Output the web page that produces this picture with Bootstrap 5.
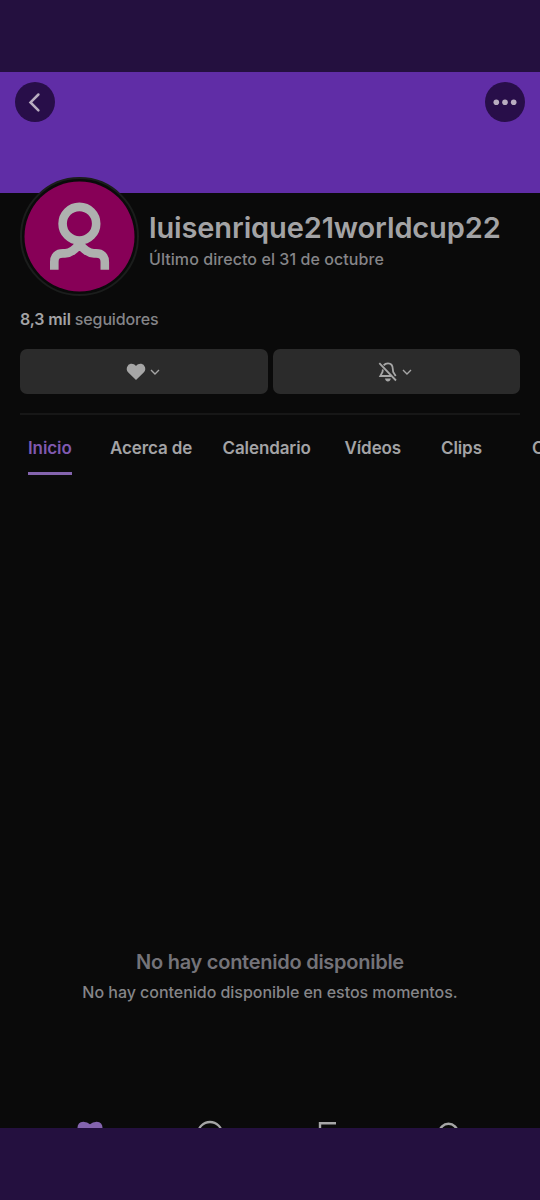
<!DOCTYPE html>
<html lang="es">
<head>
<meta charset="utf-8">
<meta name="viewport" content="width=device-width, initial-scale=1">
<title>luisenrique21worldcup22</title>
<link href="https://cdn.jsdelivr.net/npm/bootstrap@5.3.0/dist/css/bootstrap.min.css" rel="stylesheet">
<style>
body{background:#0a0a0a;color:#a3a3a5;font-family:Inter,"Liberation Sans",sans-serif;width:540px;height:1200px;overflow:hidden}
svg{display:block}
.system-bar{height:72px;background:#24103f}
.banner{height:121px;background:#602da6;padding:10px 15px}
.round-btn{width:40px;height:40px;border-radius:50%;background:#280e49;color:#b9adc0;border:0;padding:0}
.profile{height:104px;padding-left:20px;gap:10px}
.avatar{width:119px;height:119px;margin-top:-16px;border-radius:50%;background:#0a0a0a;border:2px solid #1b1d1c}
.user-name{font-size:29px;line-height:34px;font-weight:600;letter-spacing:-.13px;margin:18px 0 0;white-space:nowrap}
.last-live{font-size:16px;line-height:22px;margin-top:3px;letter-spacing:.07px;font-weight:500;color:#858588;white-space:nowrap}
.followers{height:52px;padding:10px 20px 0;font-size:16px;line-height:24px;letter-spacing:-.13px;font-weight:500;color:#858588}
.followers b{font-weight:600;color:#a3a3a5}
.actions{padding:0 20px;gap:5px;height:45px}
.action-btn{background:#2b2b2b;border:0;border-radius:7px;color:#a6a6a6;padding:0 2px 0 0;gap:4px}
.divider{height:2px;margin:19px 20px 0;background:#171717}
.tabs{display:grid;grid-template-columns:82px 112.5px 122px 96.5px 91px 8px;padding-left:28px;height:60px;font-size:17px;font-weight:600;line-height:24px;letter-spacing:-.1px;white-space:nowrap;margin-top:20px;overflow:hidden}
.tabs a{color:#a3a3a5;text-decoration:none;justify-self:start;height:40px;padding-top:1px}
.tabs a.active{color:#8059b0;border-bottom:3px solid #8464ae;width:44px}
.feed{height:625px;padding-top:453px}
.empty-title{font-size:20px;line-height:28px;font-weight:600;letter-spacing:-.26px;color:#747379;margin:0}
.empty-text{font-size:16px;line-height:24px;font-weight:500;letter-spacing:-.03px;color:#858588;margin:4px 0 0}
.bottom-nav{height:8px;overflow:hidden;padding-left:77px}
.bottom-nav svg{flex:none}
</style>
</head>
<body class="d-flex flex-column">
<div class="system-bar flex-shrink-0"></div>
<header class="banner d-flex justify-content-between align-items-start flex-shrink-0">
<button class="round-btn" aria-label="Volver"><svg width="40" height="40" fill="none" stroke="currentColor" stroke-width="2.5" stroke-linecap="round"><path d="M23.4 12.5 15.5 20.4 23.4 28.3"/></svg></button>
<button class="round-btn" aria-label="Más"><svg width="40" height="40" fill="currentColor"><circle cx="11.3" cy="20.3" r="2.8"/><circle cx="20" cy="20.3" r="2.8"/><circle cx="28.7" cy="20.3" r="2.8"/></svg></button>
</header>
<section class="profile d-flex flex-shrink-0">
<div class="avatar flex-shrink-0 position-relative"><svg width="115" height="115"><circle cx="57.5" cy="57.5" r="55" fill="#870057"/><g fill="none" stroke="#aeb1af" stroke-width="8.6"><circle cx="57.4" cy="44.7" r="16.8"/><path d="M32.3 90.7V83Q32.3 74.4 41 74.4H43Q50 74.4 57.5 65Q65 74.4 72 74.4H74Q82.8 74.4 82.8 83V90.7"/></g></svg></div>
<div><h1 class="user-name">luisenrique21worldcup22</h1><div class="last-live">Último directo el 31 de octubre</div></div>
</section>
<div class="followers flex-shrink-0"><b>8,3 mil</b> seguidores</div>
<div class="actions d-flex flex-shrink-0">
<button class="action-btn flex-fill d-flex align-items-center justify-content-center" aria-label="Seguir"><svg width="20" height="18" viewBox="0 0 20 18" fill="currentColor"><path d="M10 3.1C7.8.3 4 .2 2 2.4C.1 4.5.3 7.6 2.3 9.6L10 17L17.7 9.6C19.7 7.6 19.9 4.5 18 2.4C16 .2 12.2.3 10 3.1Z"/></svg><svg width="10" height="8" fill="none" stroke="currentColor" stroke-width="1.4"><path d="M1 2 5 6 9 2"/></svg></button>
<button class="action-btn flex-fill d-flex align-items-center justify-content-center" aria-label="Notificaciones"><svg width="20" height="20" fill="none" stroke="currentColor" stroke-width="1.8"><path d="M1.3 1.2 18 18.5M5.7 3.4C7 1.6 8.3 1.4 10 1.4C13.7 1.4 14.7 3.9 14.8 7L15.2 10 17.7 14M4.9 7.5 4.5 10 2.3 14H13"/><path d="M7 16.5H12.8Q12.2 19.5 9.9 19.5T7 16.5Z" fill="currentColor" stroke="none"/></svg><svg width="10" height="8" fill="none" stroke="currentColor" stroke-width="1.4"><path d="M1 2 5 6 9 2"/></svg></button>
</div>
<div class="divider flex-shrink-0"></div>
<nav class="tabs flex-shrink-0"><a class="active" href="#">Inicio</a><a href="#">Acerca de</a><a href="#">Calendario</a><a href="#">Vídeos</a><a href="#">Clips</a><a href="#">C</a></nav>
<main class="feed text-center flex-shrink-0"><h2 class="empty-title">No hay contenido disponible</h2><p class="empty-text">No hay contenido disponible en estos momentos.</p></main>
<nav class="bottom-nav d-flex flex-shrink-0">
<svg width="120" height="8"><path d="M.5 9Q0 2 6.3 1.7Q10.5 1.7 13 4.2Q15.5 1.7 19.7 1.7Q26 2 25.5 9Z" fill="#8464ae"/></svg>
<svg width="120" height="8" fill="none" stroke="#a6a6a6" stroke-width="2.3"><circle cx="13" cy="14" r="12"/></svg>
<svg width="120" height="8" fill="none" stroke="#a6a6a6" stroke-width="2.4"><path d="M3 12V3.2H19"/></svg>
<svg width="30" height="8" fill="none" stroke="#a6a6a6" stroke-width="2.5"><circle cx="11.5" cy="12.7" r="9"/></svg>
</nav>
<footer class="system-bar flex-shrink-0"></footer>
</body>
</html>
